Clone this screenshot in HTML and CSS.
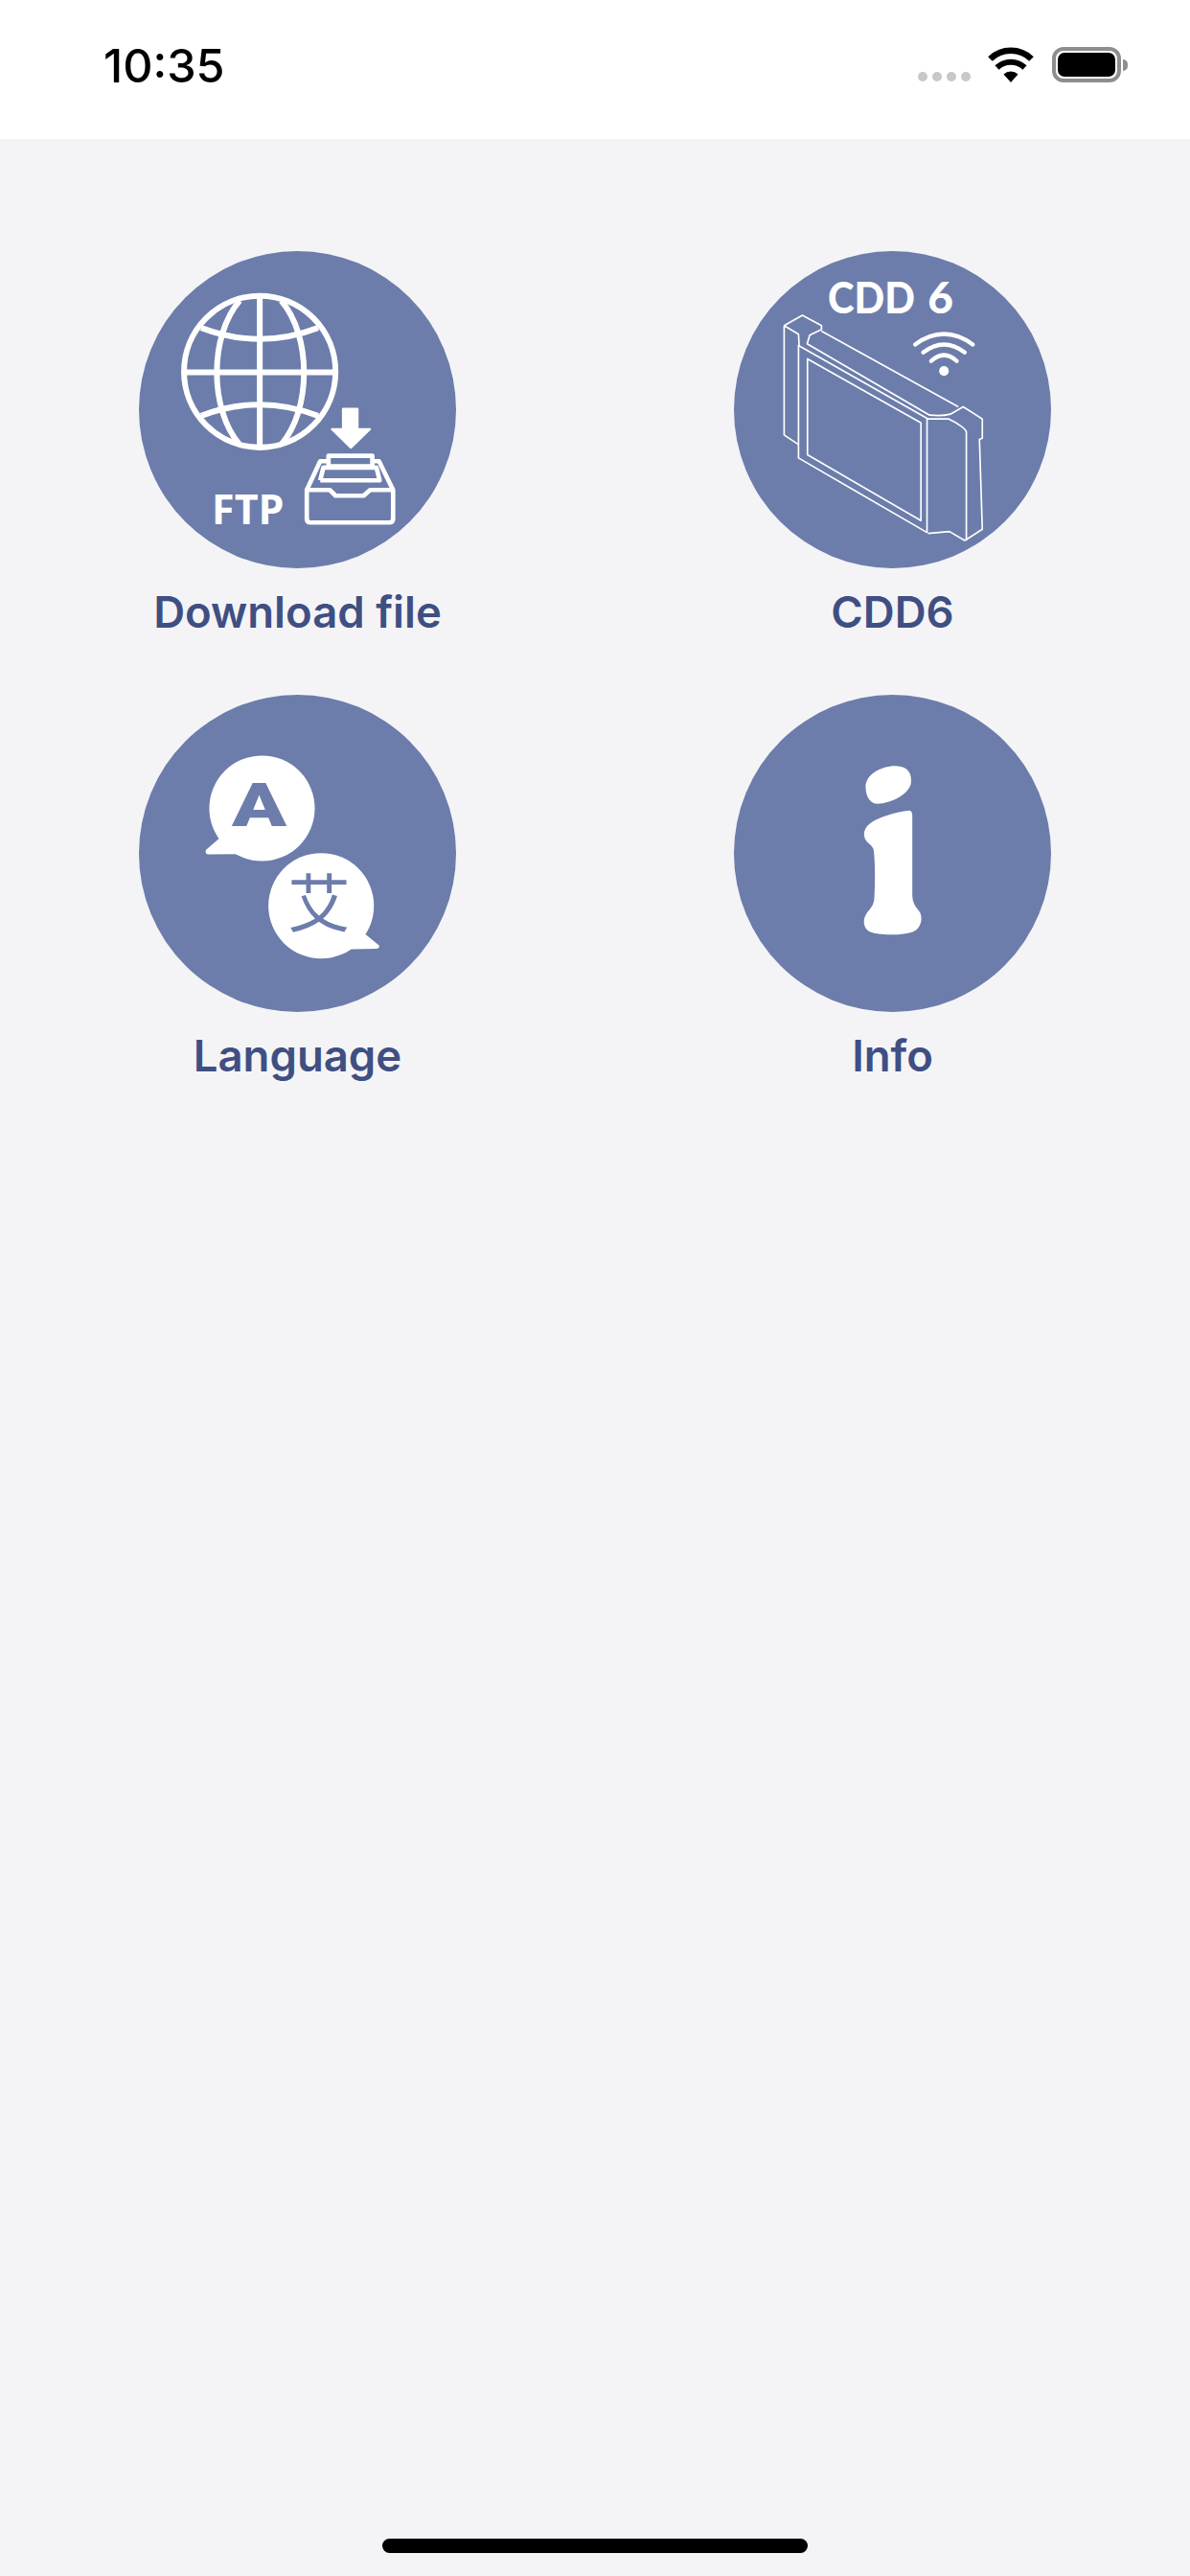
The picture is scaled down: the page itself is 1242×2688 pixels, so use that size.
FILE: index.html
```html
<!DOCTYPE html>
<html lang="en">
<head>
  <meta charset="UTF-8" />
  <meta name="viewport" content="width=device-width, initial-scale=1.0" />
  <title>Home</title>
  <link rel="stylesheet" href="styles.css">
</head>
<body>
  <header class="status-bar">
    <span class="time">10:35</span>
    <div class="status-icons">
      <div class="signal-dots"><i></i><i></i><i></i><i></i></div>
      <svg class="wifi" viewBox="0 0 48 37">
        <path d="M24 37 L16.5 28.5 A11 11 0 0 1 31.5 28.5 Z" fill="#000"/>
        <path d="M9.5 21.5 A21 21 0 0 1 38.5 21.5" fill="none" stroke="#000" stroke-width="6"/>
        <path d="M2.5 12.5 A31 31 0 0 1 45.5 12.5" fill="none" stroke="#000" stroke-width="6.5"/>
      </svg>
      <div class="battery"><div class="battery-level"></div></div>
    </div>
  </header>

  <main class="menu">
    <a class="menu-item">
      <div class="menu-circle">
        <svg viewBox="45 35 992 992">
          <g fill="none" stroke="#fff" stroke-width="18">
            <circle cx="423" cy="412" r="237"/>
            <path d="M423 180 V645 M188 414 H658"/>
            <path d="M360 190 C265 300 265 530 360 640 M490 190 C585 300 585 530 490 640"/>
            <path d="M240 275 Q423 345 605 275 M240 550 Q423 480 605 550"/>
          </g>
          <path d="M683 528 H729 V592 H768 L708 650 L648 592 H683 Z" fill="#fff" stroke="#fff" stroke-width="6" stroke-linejoin="round"/>
          <g fill="none" stroke="#fff" stroke-width="14" stroke-linejoin="round">
            <path d="M570 782 H642 L660 800 H748 L768 782 H840 V872 Q840 884 828 884 H582 Q570 884 570 872 Z"/>
            <path d="M570 782 L612 692 H636 M840 782 L796 692 H776"/>
            <path d="M638 675 H775 V708 H638 Z"/>
            <path d="M612 752 L622 712 H788 L798 752 H612"/>
          </g>
          <text class="icon-text" x="273" y="888" font-size="128" textLength="226" lengthAdjust="spacingAndGlyphs">FTP</text>
        </svg>
      </div>
      <span class="menu-label">Download file</span>
    </a>

    <a class="menu-item">
      <div class="menu-circle">
        <svg viewBox="48 35 992 992">
          <text class="icon-text cdd" x="342" y="231" font-size="138" textLength="272" lengthAdjust="spacingAndGlyphs">CDD</text>
          <text class="icon-text cdd" x="654" y="231" font-size="138">6</text>
          <g fill="none" stroke="#fff" stroke-width="13" stroke-linecap="round">
            <path d="M615 327 Q705 262 795 327"/>
            <path d="M640 352 Q705 302 770 352"/>
            <path d="M665 379 Q705 342 745 379"/>
          </g>
          <circle cx="705" cy="410" r="15" fill="#fff"/>
          <g fill="none" stroke="#fff" stroke-width="5" stroke-linejoin="round">
            <path d="M205 268 L262 236 L322 268 L322 280 L285 298 L277 325 L660 548 Q700 552 725 545 L765 522 L825 560 V620 L816 624 L825 905 L770 940 L722 912 L655 918"/>
            <path d="M205 268 V610 L250 640 M205 268 L250 295 L252 330"/>
            <path d="M250 330 V682 L652 915 V558 Z"/>
            <path d="M278 372 L633 572 V878 L278 672 Z"/>
            <path d="M322 285 L750 522"/>
            <path d="M652 560 H720 Q770 585 775 600 V940"/>
          </g>
        </svg>
      </div>
      <span class="menu-label">CDD6</span>
    </a>

    <a class="menu-item">
      <div class="menu-circle">
        <svg viewBox="45 45 992 992">
          <circle cx="430" cy="400" r="165" fill="#fff"/>
          <path d="M295 495 L255 530 Q250 543 262 544 L350 543 L400 500 Z" fill="#fff"/>
          <text class="icon-text glyph-a" x="336" y="457" font-size="186" textLength="171" lengthAdjust="spacingAndGlyphs">A</text>
          <circle cx="615" cy="705" r="165" fill="#fff"/>
          <path d="M755 795 L795 828 Q800 838 788 839 L710 841 L680 780 Z" fill="#fff"/>
          <text class="icon-text glyph-cjk" x="608" y="770" font-size="196" text-anchor="middle">艾</text>
        </svg>
      </div>
      <span class="menu-label">Language</span>
    </a>

    <a class="menu-item">
      <div class="menu-circle">
        <svg viewBox="48 45 992 992">
          <path fill="#fff" d="M460 335 C458 295 510 265 560 268 C595 270 605 295 602 320 C598 355 540 385 497 386 C475 386 461 365 460 335 Z"/>
          <path fill="#fff" d="M597 407 C604 408 606 415 606 425 V670 C606 700 620 712 630 725 C640 745 632 775 610 785 C580 798 500 798 475 787 C450 775 450 745 465 725 C478 710 486 700 487 680 C490 640 490 570 485 530 C482 515 465 510 458 495 C448 470 465 450 490 437 C520 422 565 410 597 407 Z"/>
        </svg>
      </div>
      <span class="menu-label">Info</span>
    </a>
  </main>

  <footer class="home-area"><div class="home-indicator"></div></footer>
</body>
</html>
```
FILE: styles.css
```css
html, body {
  margin: 0;
  height: 2688px;
}
body {
  display: flex;
  flex-direction: column;
  background: #f4f4f7;
  font-family: Inter, Roboto, sans-serif;
}

/* status bar */
.status-bar {
  height: 145px;
  background: #fff;
  display: flex;
  justify-content: space-between;
  align-items: flex-start;
  padding: 0 72px 0 108px;
}
.time {
  font-size: 48.5px;
  font-weight: 500;
  line-height: 57px;
  margin-top: 40px;
  color: #000;
}
.status-icons {
  display: flex;
  align-items: flex-end;
  margin-top: 49px;
}
.signal-dots {
  display: flex;
  gap: 5px;
  margin: 0 18px 1px 0;
}
.signal-dots i {
  width: 10px;
  height: 10px;
  border-radius: 50%;
  background: #c8c8c8;
}
.wifi {
  width: 48px;
  height: 37px;
  margin-right: 19px;
}
.battery {
  position: relative;
  box-sizing: border-box;
  width: 72px;
  height: 37px;
  padding: 2px;
  border: 4px solid #8e8e8e;
  border-radius: 12px;
}
.battery::after {
  content: "";
  position: absolute;
  right: -11px;
  top: 9px;
  width: 5px;
  height: 12px;
  background: #8e8e8e;
  border-radius: 0 6px 6px 0;
}
.battery-level {
  height: 100%;
  background: #000;
  border-radius: 7px;
}

/* menu grid */
.menu {
  flex: 1;
  display: grid;
  grid-template-columns: 1fr 1fr;
  grid-auto-rows: 463px;
  padding-top: 117px;
}
.menu-item {
  display: flex;
  flex-direction: column;
  align-items: center;
}
.menu-circle {
  width: 331px;
  height: 331px;
  border-radius: 50%;
  background: #6c7dab;
}
.menu-circle svg {
  display: block;
  width: 100%;
  height: 100%;
}
.menu-label {
  margin-top: 18px;
  font-size: 45.5px;
  line-height: 56px;
  font-weight: 600;
  color: #3f4f82;
}

/* text inside the icons */
.icon-text {
  fill: #fff;
  font-family: "Open Sans", sans-serif;
  font-weight: 700;
}
.cdd {
  font-family: Lato, sans-serif;
  font-weight: 900;
}
.glyph-a {
  fill: #6c7dab;
  font-family: Roboto, sans-serif;
  font-weight: 900;
}
.glyph-cjk {
  fill: #6c7dab;
  font-family: "Noto Sans CJK SC", sans-serif;
  font-weight: 400;
}

/* home indicator */
.home-area {
  display: flex;
  justify-content: center;
  padding-bottom: 24px;
}
.home-indicator {
  width: 444px;
  height: 15px;
  border-radius: 8px;
  background: #000;
}
```
